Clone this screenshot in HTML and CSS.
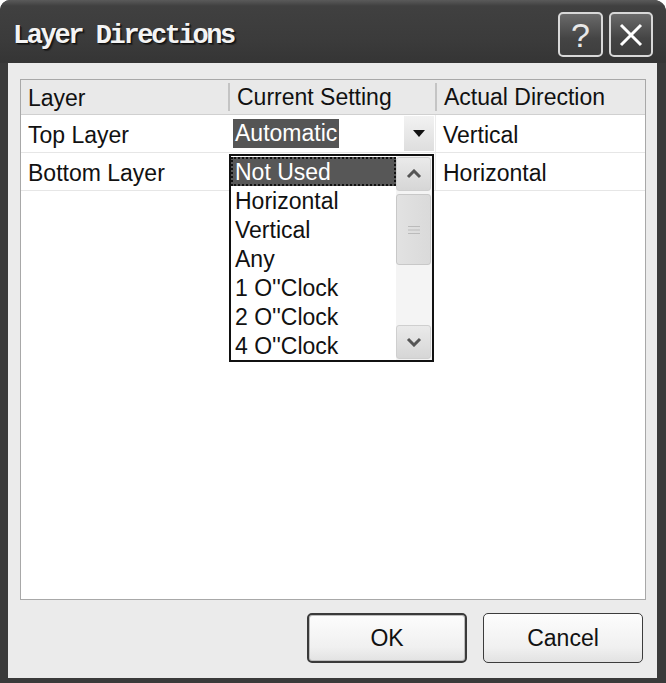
FILE: index.html
```html
<!DOCTYPE html>
<html>
<head>
<meta charset="utf-8">
<link rel="stylesheet" href="styles.css">
</head>
<body>
<div class="window">
  <div class="titlebar">
    <div class="title">Layer Directions</div>
    <div class="tb-buttons">
      <div class="tb-btn">?</div>
      <div class="tb-btn close">
        <svg width="28" height="28" viewBox="0 0 28 28"><path d="M4 4 L24 24 M24 4 L4 24" stroke="#fff" stroke-width="3" fill="none"/></svg>
      </div>
    </div>
  </div>
  <div class="body">
    <div class="grid">
      <div class="row head">
        <div class="cell">Layer</div>
        <div class="cell sep">Current Setting</div>
        <div class="cell sep">Actual Direction</div>
      </div>
      <div class="row">
        <div class="cell">Top Layer</div>
        <div class="cell combo">
          <span class="hl">Automatic</span>
          <span class="drop-btn"><svg width="12" height="7" viewBox="0 0 12 7"><path d="M0 0 H12 L6 7 Z" fill="#111"/></svg></span>
        </div>
        <div class="cell sep-light">Vertical</div>
      </div>
      <div class="row">
        <div class="cell">Bottom Layer</div>
        <div class="cell"></div>
        <div class="cell sep-light">Horizontal</div>
      </div>
      <div class="list">
        <div class="items">
          <div class="item sel">Not Used</div>
          <div class="item">Horizontal</div>
          <div class="item">Vertical</div>
          <div class="item">Any</div>
          <div class="item">1 O''Clock</div>
          <div class="item">2 O''Clock</div>
          <div class="item">4 O''Clock</div>
        </div>
        <div class="scroll">
          <div class="sb-btn"><svg width="16" height="10" viewBox="0 0 16 10"><path d="M2 8 L8 2 L14 8" stroke="#555" stroke-width="3" fill="none"/></svg></div>
          <div class="thumb"><svg width="12" height="10" viewBox="0 0 12 10"><path d="M0 1.5 H12 M0 5 H12 M0 8.5 H12" stroke="#bbb" stroke-width="1.2"/></svg></div>
          <div class="track"></div>
          <div class="sb-btn"><svg width="16" height="10" viewBox="0 0 16 10"><path d="M2 2 L8 8 L14 2" stroke="#555" stroke-width="3" fill="none"/></svg></div>
        </div>
      </div>
    </div>
    <div class="actions">
      <button class="btn default">OK</button>
      <button class="btn">Cancel</button>
    </div>
  </div>
</div>
</body>
</html>
```
FILE: styles.css
```css
html, body {
  margin: 0;
  padding: 0;
  background: #ffffff;
}
.window {
  width: 666px;
  height: 683px;
  display: flex;
  flex-direction: column;
  background: #3a3a3a;
  border-radius: 10px 12px 0 0;
  box-sizing: border-box;
  overflow: hidden;
}
.titlebar {
  height: 63px;
  flex: none;
  display: flex;
  align-items: center;
  padding-left: 13px;
  padding-right: 13px;
  background: linear-gradient(#5a5a5a 0px, #404040 6px, #3b3b3b 40px, #353535 63px);
}
.title {
  font-family: "Liberation Mono", "DejaVu Sans Mono", monospace;
  font-weight: bold;
  font-size: 27px;
  letter-spacing: -2.4px;
  color: #f4f4f4;
  text-shadow: 1px 1px 0 #111, 2px 2px 1px #222;
  margin-top: 8px;
}
.tb-buttons {
  margin-left: auto;
  display: flex;
  gap: 6px;
  margin-top: 6px;
}
.tb-btn {
  width: 45px;
  height: 45px;
  box-sizing: border-box;
  border: 2px solid #d8d8d8;
  border-radius: 5px;
  background: linear-gradient(#6a6a6a, #444 60%, #3e3e3e);
  color: #e8e8e8;
  font-family: "Liberation Sans", Arial, sans-serif;
  font-size: 34px;
  display: flex;
  align-items: center;
  justify-content: center;
  line-height: 1;
}
.close {
  width: 44px;
}
.body {
  flex: 1;
  margin: 0 9px 5px 8px;
  background: #ebebeb;
  padding: 16px 11px 0 12px;
  display: flex;
  flex-direction: column;
  font-family: "Liberation Sans", Arial, sans-serif;
  font-size: 23px;
  color: #111;
}
.grid {
  position: relative;
  height: 521px;
  box-sizing: border-box;
  border: 1px solid #a8a8a8;
  background: #fff;
}
.row {
  display: grid;
  grid-template-columns: 207px 207px 1fr;
  height: 38px;
  box-sizing: border-box;
  border-bottom: 1px solid #e6e6e6;
}
.row.head {
  height: 35px;
  background: #e9e9e9;
  border-bottom: 1px solid #d0d0d0;
}
.cell {
  display: flex;
  align-items: center;
  padding-left: 7px;
  padding-top: 3px;
  white-space: nowrap;
  box-sizing: border-box;
}
.cell.sep {
  border-left: 2px solid #c4c4c4;
  padding-left: 7px;
  padding-top: 0;
  margin: 3px 0;
}
.cell.sep-light {
  border-left: 1px solid #ececec;
  padding-left: 7px;
}
.combo {
  padding-left: 5px;
  padding-right: 1px;
  padding-top: 0;
}
.hl {
  background: #555;
  color: #fff;
  padding: 1px 2px;
  line-height: 27px;
}
.drop-btn {
  margin-left: auto;
  width: 30px;
  height: 35px;
  background: linear-gradient(#f2f2f2, #dedede);
  display: flex;
  align-items: center;
  justify-content: center;
}
.list {
  position: absolute;
  left: 208px;
  top: 74px;
  width: 205px;
  height: 208px;
  box-sizing: border-box;
  border: 2px solid #111;
  background: #fff;
  display: flex;
}
.items {
  flex: 1;
  padding-top: 1px;
}
.item {
  height: 29px;
  line-height: 30px;
  padding-left: 4px;
  white-space: nowrap;
}
.item.sel {
  background: #575757;
  color: #fff;
  outline: 2px dotted #111;
  outline-offset: -2px;
}
.scroll {
  width: 35px;
  display: flex;
  flex-direction: column;
  padding: 1px 1px 1px 0;
  gap: 3px;
  background: #f4f4f4;
}
.sb-btn {
  height: 34px;
  box-sizing: border-box;
  border: 1px solid #cfcfcf;
  border-radius: 3px;
  background: linear-gradient(#eaeaea, #d6d6d6);
  display: flex;
  align-items: center;
  justify-content: center;
}
.thumb {
  height: 71px;
  box-sizing: border-box;
  border: 1px solid #c8c8c8;
  border-radius: 3px;
  background: linear-gradient(90deg, #e2e2e2, #dadada);
  display: flex;
  align-items: center;
  justify-content: center;
}
.track {
  flex: 1;
}
.actions {
  display: flex;
  justify-content: flex-end;
  gap: 16px;
  padding: 13px 3px 0 0;
}
.btn {
  width: 160px;
  height: 50px;
  box-sizing: border-box;
  border: 1px solid #3c3c3c;
  border-radius: 5px;
  background: linear-gradient(#fdfdfd, #f0f0f0 70%, #e2e2e2);
  font-family: "Liberation Sans", Arial, sans-serif;
  font-size: 23px;
  color: #111;
  padding: 0;
}
.btn.default {
  border: 2px solid #3a3a3a;
  box-shadow: inset 0 0 0 1px #bdbdbd;
}
```
